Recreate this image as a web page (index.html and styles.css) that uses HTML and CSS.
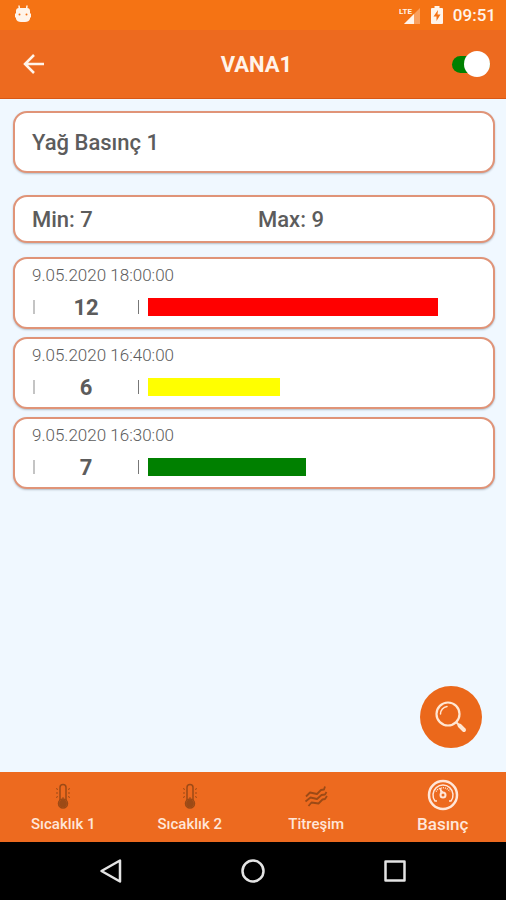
FILE: index.html
```html
<!DOCTYPE html>
<html lang="tr">
<head>
<meta charset="utf-8">
<meta name="viewport" content="width=device-width, initial-scale=1">
<title>VANA1</title>
<link rel="stylesheet" href="styles.css">
</head>
<body>
<div class="status">
  <svg class="droid" width="18" height="20" viewBox="0 0 18 20" aria-hidden="true">
    <path d="M5.500 6 5 1.500M12.500 6l.500-4.500" stroke="currentColor" stroke-width="1.500"/>
    <path d="M5 4h8q3 0 3 3v2l1 1v3l-1 1v1q-1 3-5 3H7q-4 0-5-3v-1l-1-1v-3l1-1V7q0-3 3-3z" fill="currentColor"/>
    <circle class="cutout" cx="5.500" cy="10.500" r="1"/><circle class="cutout" cx="12.500" cy="10.500" r="1"/>
  </svg>
  <div class="indicators">
    <svg width="22" height="20" viewBox="0 0 22 20" aria-label="LTE">
      <path d="M21 3v16H5z" fill="currentColor" opacity=".35"/>
      <path d="M15 9v10H5z" fill="currentColor"/>
      <text class="lte" x="0" y="9">LTE</text>
    </svg>
    <svg width="12" height="18" viewBox="0 0 12 18" aria-hidden="true">
      <path d="M3.500 0h5v2H11q1 0 1 1v14q0 1-1 1H1q-1 0-1-1V3q0-1 1-1h2.500z" fill="currentColor"/>
      <path class="cutout" d="M7 4 2.500 10.500h3V15L9.500 8.500h-3z"/>
    </svg>
    <span class="clock">09:51</span>
  </div>
</div>
<header class="appbar">
  <button class="back" type="button" aria-label="Geri">
    <svg width="22" height="20" viewBox="0 0 22 20" fill="none" stroke="currentColor" stroke-width="2.500"><path d="M21 10H2M11 1 2 10l9 9"/></svg>
  </button>
  <h1>VANA1</h1>
  <input class="switch" type="checkbox" role="switch" aria-label="VANA1" checked>
</header>
<main>
  <h2 class="card sensor">Yağ Basınç 1</h2>
  <section class="card range"><span>Min: 7</span><span>Max: 9</span></section>
  <ul class="readings">
    <li class="card reading">
      <time>9.05.2020 18:00:00</time>
      <div class="row"><i class="tick faint"></i><b>12</b><i class="tick"></i><div class="track"><div class="bar high" style="width:88%"></div></div></div>
    </li>
    <li class="card reading">
      <time>9.05.2020 16:40:00</time>
      <div class="row"><i class="tick faint"></i><b>6</b><i class="tick"></i><div class="track"><div class="bar low" style="width:40%"></div></div></div>
    </li>
    <li class="card reading">
      <time>9.05.2020 16:30:00</time>
      <div class="row"><i class="tick faint"></i><b>7</b><i class="tick"></i><div class="track"><div class="bar normal" style="width:48%"></div></div></div>
    </li>
  </ul>
  <button class="fab" type="button" aria-label="Ara">
    <svg width="32" height="32" viewBox="0 0 32 32" fill="none" stroke="currentColor" stroke-linecap="round">
      <circle cx="13" cy="13" r="11.500" stroke-width="2.200"/>
      <path d="M5.500 13A7.500 7.500 0 0 1 12 5.500" stroke-width="1.500"/>
      <path d="m21.500 21.500 2.500 2.500" stroke-width="2"/>
      <path d="m24.500 24.500 4.500 4.500" stroke-width="4"/>
    </svg>
  </button>
</main>
<nav class="tabs">
  <a href="#sicaklik1">
    <svg class="dim" width="16" height="28" viewBox="0 0 16 28" fill="none" stroke="currentColor">
      <path d="M5 18V5.500a3 3 0 0 1 6 0V18" stroke-width="1.500"/>
      <circle cx="8" cy="21.500" r="4.500" stroke-width="1.500"/><circle cx="8" cy="21.500" r="3.500" fill="currentColor"/>
      <path d="M8 15v6M1 6.500l2 1M1 11h2M1 15.500l2-1M15 6.500l-2 1M15 11h-2M15 15.500l-2-1"/>
    </svg>
    <span>Sıcaklık 1</span>
  </a>
  <a href="#sicaklik2">
    <svg class="dim" width="16" height="28" viewBox="0 0 16 28" fill="none" stroke="currentColor">
      <path d="M5 18V5.500a3 3 0 0 1 6 0V18" stroke-width="1.500"/>
      <circle cx="8" cy="21.500" r="4.500" stroke-width="1.500"/><circle cx="8" cy="21.500" r="3.500" fill="currentColor"/>
      <path d="M8 15v6M1 6.500l2 1M1 11h2M1 15.500l2-1M15 6.500l-2 1M15 11h-2M15 15.500l-2-1"/>
    </svg>
    <span>Sıcaklık 2</span>
  </a>
  <a href="#titresim">
    <svg class="dim" width="24" height="28" viewBox="0 0 24 28" fill="none" stroke="currentColor" stroke-width="1.800" stroke-linejoin="round">
      <path d="m2 14.500 4-4 7 1.500 4-4 3-.500 1-3M1.500 19.500l5-4 6.500 1.500 4.500-4 3.500-.500 1.500-2.500M4.500 24l3-3.500 7 1 4-4 2.500-.500 2-3"/>
    </svg>
    <span>Titreşim</span>
  </a>
  <a class="active" href="#basinc" aria-current="page">
    <svg width="32" height="32" viewBox="0 0 32 32" fill="none" stroke="currentColor">
      <circle cx="16" cy="16" r="14" stroke-width="2.500"/>
      <path d="M10 22H8a10 10 0 1 1 16 0h-2" stroke-width="1.500"/>
      <path d="M9 12.500a8.500 8.500 0 0 1 14 0" stroke-width="1.500" stroke-dasharray="1 1"/>
      <circle cx="16" cy="16" r="2.500" stroke-width="2"/>
      <path d="m13 9 1 5 2-.500z" fill="currentColor"/>
    </svg>
    <span>Basınç</span>
  </a>
</nav>
<div class="system">
  <button type="button" aria-label="Geri"><svg width="24" height="24" viewBox="0 0 24 24"><path d="M21 1.500v21L2.500 12z"/></svg></button>
  <button type="button" aria-label="Ana ekran"><svg width="24" height="24" viewBox="0 0 24 24"><circle cx="12" cy="12" r="10.500"/></svg></button>
  <button type="button" aria-label="Son uygulamalar"><svg width="24" height="24" viewBox="0 0 24 24"><path d="M2.500 2.500h19v19h-19z"/></svg></button>
</div>
</body>
</html>
```
FILE: styles.css
```css
* { box-sizing: border-box; }
body {
  margin: 0;
  min-height: 100vh;
  display: flex;
  flex-direction: column;
  background: #f0f8ff;
  color: #5c5c5c;
  font-family: Roboto, "Liberation Sans", sans-serif;
}
h1, h2, ul { margin: 0; padding: 0; list-style: none; }
button { padding: 0; border: 0; background: none; color: inherit; }
svg { display: block; }

.status {
  display: flex;
  align-items: center;
  justify-content: space-between;
  height: 30px;
  padding: 0 10px 0 14px;
  background: #f57314;
  color: #fff4ea;
}
.cutout { fill: #f57314; }
.droid { margin-bottom: 2px; }
.indicators { display: flex; align-items: center; gap: 10px; }
.lte { font-size: 8px; font-weight: 700; fill: currentColor; }
.clock { font-size: 17px; font-weight: 500; }

.appbar {
  display: grid;
  grid-template-columns: 1fr auto 1fr;
  align-items: center;
  height: 69px;
  padding: 0 16px 0 23px;
  background: #ed6a1f;
  border-bottom: 1px solid #d85716;
  color: #fff4ea;
}
.appbar h1 { font-size: 22px; font-weight: 700; }
.back { justify-self: start; }
.switch {
  appearance: none;
  justify-self: end;
  display: flex;
  align-items: center;
  justify-content: flex-end;
  width: 38px;
  height: 17px;
  margin: 0;
  border-radius: 9px;
  background: #008000;
}
.switch::before {
  content: "";
  flex: none;
  width: 26px;
  height: 26px;
  border-radius: 50%;
  background: #fff;
}
.switch:not(:checked) { justify-content: flex-start; background: #999; }

main {
  position: relative;
  flex: 1;
  padding: 12px 11px 12px 13px;
}
.card {
  border: 2px solid #e09478;
  border-radius: 14px;
  background: #fff;
  box-shadow: 0 1px 2px #b4bec8;
}
.sensor, .range { padding: 2px 17px 0; font-size: 22px; font-weight: 500; }
.sensor { line-height: 56px; margin-bottom: 22px; }
.range {
  display: grid;
  grid-template-columns: 1fr 1fr;
  column-gap: 8px;
  line-height: 42px;
  margin-bottom: 14px;
}
.readings { display: grid; gap: 8px; }
.reading { padding: 6px 16px 8px 17px; }
.reading time { display: block; font-size: 17px; font-weight: 300; line-height: 20px; }
.row { display: flex; align-items: center; height: 34px; padding-top: 10px; }
.row b { width: 102px; text-align: center; font-size: 22px; font-weight: 700; }
.tick { width: 1px; height: 14px; margin-left: 1px; background: #777; }
.faint { width: 2px; background: #c4c4c4; }
.track { flex: 1; margin-left: 9px; }
.bar { height: 18px; }
.high { background: #f00; }
.low { background: #ff0; }
.normal { background: #008000; }

.fab {
  position: absolute;
  right: 24px;
  bottom: 24px;
  display: grid;
  place-items: center;
  width: 62px;
  height: 62px;
  border-radius: 50%;
  background: #eb681b;
  color: #ffe6d2;
}

.tabs {
  display: grid;
  grid-template-columns: repeat(4, 1fr);
  height: 70px;
  background: #ed6a1f;
}
.tabs a {
  display: flex;
  flex-direction: column;
  align-items: center;
  justify-content: flex-end;
  padding-bottom: 8px;
  color: #ffe6d9;
  text-decoration: none;
  font-size: 15px;
  font-weight: 500;
  line-height: 20px;
}
.tabs svg { margin-bottom: 4px; }
.tabs .dim { color: #9c4a16; }
.tabs .active { font-size: 17px; }
.tabs .active svg { margin-bottom: 3px; }

.system {
  display: flex;
  align-items: center;
  justify-content: center;
  gap: 118px;
  height: 58px;
  background: #000;
}
.system svg { fill: none; stroke: #e4e4e4; stroke-width: 2.500; stroke-linejoin: round; }
```
